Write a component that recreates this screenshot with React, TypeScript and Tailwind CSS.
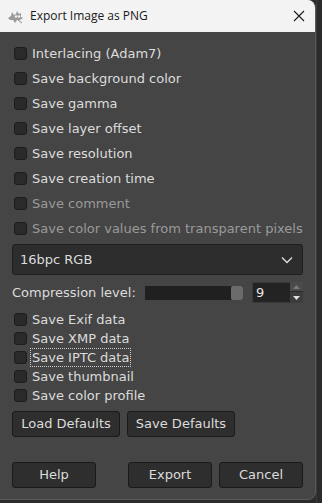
import React from "react";

function Check({ label, disabled, focus }: { label: string; disabled?: boolean; focus?: boolean }) {
  return (
    <div className="flex items-center h-full">
      <div className="w-[13px] h-[13px] rounded-[3px] bg-[#2a2a2a] border border-[#1c1c1c] ml-[14px] shrink-0" />
      <span
        className={
          "ml-[4px] px-[1px] leading-[17px] " +
          (disabled ? "text-[#9a9a9a] " : "text-[#dcdcdc] ") +
          (focus ? "outline outline-1 outline-dotted outline-[#d0d0d0]" : "")
        }
      >
        {label}
      </span>
    </div>
  );
}

function Btn({ children, w }: { children: React.ReactNode; w: string }) {
  return (
    <div
      className={
        "h-[26px] rounded-[3px] bg-[#2e2e2e] border border-[#1a1a1a] flex items-center justify-center text-[#dcdcdc] " + w
      }
    >
      {children}
    </div>
  );
}

export default function App() {
  const top = [
    ["Interlacing (Adam7)"],
    ["Save background color"],
    ["Save gamma"],
    ["Save layer offset"],
    ["Save resolution"],
    ["Save creation time"],
    ["Save comment", "d"],
    ["Save color values from transparent pixels", "d"],
  ];
  const bottom = ["Save Exif data", "Save XMP data", "Save IPTC data", "Save thumbnail", "Save color profile"];
  return (
    <div className="w-[322px] h-[503px] flex bg-[#2b2b2b] overflow-hidden" style={{ fontFamily: '"DejaVu Sans", sans-serif' }}>
      <div className="w-[316px] h-[500px] bg-[#454545] rounded-tr-[8px] rounded-br-[8px] overflow-hidden flex flex-col text-[13px] border-r border-b border-[#5a5a5a]">
        {/* title bar */}
        <div className="h-[32px] bg-[#f3f3f3] flex items-center shrink-0" style={{ fontFamily: '"Open Sans", "Noto Sans", sans-serif' }}>
          <svg width="17" height="15" viewBox="0 0 17 15" className="ml-[7px]">
            <path d="M1 9 L4 7 L5 3 L7 6 L9 5 L10 2 L12 5 L14 4 L14 8 L16 9 L13 11 L10 11 L8 14 L6 11 L3 11 Z" fill="#9a9a9a" />
            <circle cx="9" cy="7.5" r="1.3" fill="#f3f3f3" />
            <circle cx="12" cy="7.5" r="1.3" fill="#f3f3f3" />
            <path d="M11 11 L15 14" stroke="#8a8a8a" strokeWidth="1" />
          </svg>
          <span className="ml-[6px] text-[12px] text-[#1a1a1a]">Export Image as PNG</span>
          <svg width="12" height="12" viewBox="0 0 12 12" className="ml-auto mr-[10px]">
            <path d="M1 1 L11 11 M11 1 L1 11" stroke="#1a1a1a" strokeWidth="1.1" />
          </svg>
        </div>
        {/* body */}
        <div className="flex flex-col">
          <div className="mt-[9px] flex flex-col">
            {top.map(([l, d]) => (
              <div key={l} className="h-[25px]">
                <Check label={l} disabled={!!d} />
              </div>
            ))}
          </div>
          <div className="mx-[12px] mt-[3px] h-[31px] rounded-[3px] bg-[#2d2d2d] border border-[#1e1e1e] flex items-center text-[#dcdcdc]">
            <span className="ml-[7px]">16bpc RGB</span>
            <svg width="12" height="8" viewBox="0 0 12 8" className="ml-auto mr-[9px]">
              <path d="M1 1.5 L6 6.5 L11 1.5" stroke="#e0e0e0" strokeWidth="1.3" fill="none" />
            </svg>
          </div>
          <div className="flex items-center mt-[7px] h-[21px]">
            <span className="ml-[12px] w-[133px] shrink-0 text-[#dcdcdc] whitespace-nowrap">Compression level:</span>
            <div className="w-[98px] h-[14px] bg-[#202020] flex items-center justify-end">
              <div className="w-[12px] h-[14px] rounded-[2px] bg-[#6b6b6b]" />
            </div>
            <div className="ml-[9px] w-[51px] h-[21px] bg-[#3a3a3a] flex">
              <div className="flex-1 bg-[#232323] m-[1px] mr-0 flex items-center">
                <span className="ml-[3px] text-[#e6e6e6]">9</span>
              </div>
              <div className="w-[13px] flex flex-col">
                <div className="h-[10px] bg-[#4a4a4a] flex items-center justify-center border-b border-[#2a2a2a]">
                  <svg width="7" height="4" viewBox="0 0 7 4"><path d="M0 4 L3.5 0 L7 4 Z" fill="#7a7a7a" /></svg>
                </div>
                <div className="flex-1 bg-[#3c3c3c] flex items-center justify-center">
                  <svg width="7" height="4" viewBox="0 0 7 4"><path d="M0 0 L3.5 4 L7 0 Z" fill="#e0e0e0" /></svg>
                </div>
              </div>
            </div>
          </div>
          <div className="mt-[7px] flex flex-col">
            {bottom.map((l) => (
              <div key={l} className="h-[19px]">
                <Check label={l} focus={l === "Save IPTC data"} />
              </div>
            ))}
          </div>
          <div className="flex mt-[6px] ml-[12px] gap-[7px]">
            <Btn w="w-[108px]">Load Defaults</Btn>
            <Btn w="w-[108px]">Save Defaults</Btn>
          </div>
          <div className="flex mt-[25px] ml-[12px]">
            <Btn w="w-[84px]">Help</Btn>
            <Btn w="w-[84px] ml-[32px]">Export</Btn>
            <Btn w="w-[84px] ml-[7px]">Cancel</Btn>
          </div>
        </div>
      </div>
      <div className="flex-1 border-l border-[#3a3a3a]" />
    </div>
  );
}
